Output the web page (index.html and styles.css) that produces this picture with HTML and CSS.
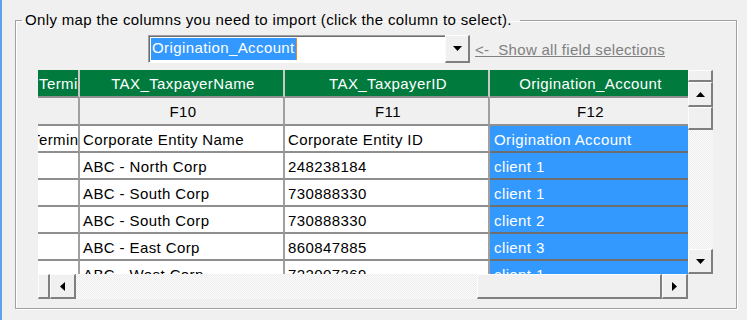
FILE: index.html
```html
<!DOCTYPE html>
<html>
<head>
<meta charset="utf-8">
<link rel="stylesheet" href="styles.css">
</head>
<body>
<fieldset class="group">
  <legend class="legend">Only map the columns you need to import (click the column to select).</legend>
  <div class="combo-row">
    <div class="combo">
      <div class="combo-field"><span class="sel">Origination_Account</span></div>
      <div class="sb-btn combo-btn"><svg width="9" height="5" viewBox="0 0 9 5"><polygon points="0,0 9,0 4.5,5" fill="#000"/></svg></div>
    </div>
    <span class="link">&lt;- &nbsp;Show all field selections</span>
  </div>
  <div class="gridbox">
    <div class="viewport">
      <div class="row head">
        <div class="cell c1">Termi</div>
        <div class="cell">TAX_TaxpayerName</div>
        <div class="cell">TAX_TaxpayerID</div>
        <div class="cell last">Origination_Account</div>
      </div>
      <div class="row fields">
        <div class="cell c1"></div>
        <div class="cell">F10</div>
        <div class="cell">F11</div>
        <div class="cell last">F12</div>
      </div>
      <div class="row">
        <div class="cell c1"><span class="clip">Termin</span></div>
        <div class="cell">Corporate Entity Name</div>
        <div class="cell">Corporate Entity ID</div>
        <div class="cell last sel-col">Origination Account</div>
      </div>
      <div class="row">
        <div class="cell c1"></div>
        <div class="cell">ABC - North Corp</div>
        <div class="cell">248238184</div>
        <div class="cell last sel-col">client 1</div>
      </div>
      <div class="row">
        <div class="cell c1"></div>
        <div class="cell">ABC - South Corp</div>
        <div class="cell">730888330</div>
        <div class="cell last sel-col">client 1</div>
      </div>
      <div class="row">
        <div class="cell c1"></div>
        <div class="cell">ABC - South Corp</div>
        <div class="cell">730888330</div>
        <div class="cell last sel-col">client 2</div>
      </div>
      <div class="row">
        <div class="cell c1"></div>
        <div class="cell">ABC - East Corp</div>
        <div class="cell">860847885</div>
        <div class="cell last sel-col">client 3</div>
      </div>
      <div class="row">
        <div class="cell c1"></div>
        <div class="cell">ABC - West Corp</div>
        <div class="cell">722007369</div>
        <div class="cell last sel-col">client 1</div>
      </div>
    </div>
    <div class="vscroll">
      <div class="sb-btn split-v"></div>
      <div class="sb-btn arrow"><svg width="9" height="5" viewBox="0 0 9 5"><polygon points="4.5,0 9,5 0,5" fill="#000"/></svg></div>
      <div class="sb-btn thumb-v"></div>
      <div class="track"></div>
      <div class="sb-btn arrow"><svg width="9" height="5" viewBox="0 0 9 5"><polygon points="0,0 9,0 4.5,5" fill="#000"/></svg></div>
    </div>
    <div class="hscroll">
      <div class="sb-btn split-h"></div>
      <div class="sb-btn arrow-h"><svg width="5" height="9" viewBox="0 0 5 9"><polygon points="5,0 5,9 0,4.5" fill="#000"/></svg></div>
      <div class="track"></div>
      <div class="sb-btn thumb-h"></div>
      <div class="sb-btn arrow-h"><svg width="5" height="9" viewBox="0 0 5 9"><polygon points="0,0 5,4.5 0,9" fill="#000"/></svg></div>
    </div>
    <div class="corner"></div>
  </div>
</fieldset>
</body>
</html>
```

FILE: styles.css
```css
html, body {
  margin: 0;
  padding: 0;
}
body {
  width: 747px;
  height: 320px;
  box-sizing: border-box;
  border-left: 2px solid #5ea2ec;
  background: #f0f0f0;
  overflow: hidden;
  font-family: "Liberation Sans", Arial, sans-serif;
  font-size: 15px;
  letter-spacing: 0.4px;
  color: #000;
}
.group {
  margin: 10px 0 0 13px;
  padding: 5px 0 0 0;
  width: 722px;
  height: 299px;
  box-sizing: border-box;
  border: 1px solid #a0a0a0;
  box-shadow: inset 1px 1px 0 #fff, 1px 1px 0 #fff;
  min-width: 0;
}
.legend {
  margin-left: 6px;
  padding: 0 8px 0 3px;
  line-height: 20px;
  letter-spacing: 0.35px;
}
.combo-row {
  display: flex;
  align-items: center;
  margin-left: 132px;
  height: 28px;
}
.combo {
  display: flex;
  width: 322px;
  height: 28px;
  box-sizing: border-box;
}
.combo-field {
  flex: 1;
  background: #fff;
  border-top: 1px solid #a0a0a0;
  border-left: 1px solid #a0a0a0;
  border-bottom: 1px solid #fff;
  box-shadow: inset 1px 1px 0 #6d6d6d;
  padding: 2px 0 2px 2px;
  display: flex;
}
.sel {
  background: #3399ff;
  color: #fff;
  line-height: 20px;
  padding: 0 1px 0 1px;
  border-right: 1px solid #e08a2a;
}
.combo-btn {
  width: 25px;
}
.link {
  margin-left: 5px;
  color: #808080;
  text-decoration: underline;
  letter-spacing: 0.3px;
}
.gridbox {
  margin: 7px 0 0 22px;
  display: grid;
  grid-template-columns: 650px 25px;
  grid-template-rows: 204px 25px;
}
.viewport {
  overflow: hidden;
  background: #f0f0f0;
}
.row {
  display: grid;
  grid-template-columns: 42px 205px 205px 198px;
  height: 27px;
}
.row.head, .row.fields {
  height: 28px;
}
.cell {
  box-sizing: border-box;
  border-right: 2px solid #a0a0a0;
  border-bottom: 2px solid #8f8f8f;
  background: #fff;
  padding: 1px 0 0 3px;
  white-space: nowrap;
  overflow: hidden;
  display: flex;
  align-items: center;
}
.cell.last {
  border-right: none;
}
.head .cell {
  background: #007a3d;
  color: #fff;
  justify-content: center;
  border-right-color: #c8c8c8;
}
.head .cell.c1 {
  justify-content: flex-start;
  padding-left: 1px;
}
.fields .cell {
  background: #f0f0f0;
  justify-content: center;
}
.cell.c1 {
  padding-left: 0;
}
.clip {
  margin-left: -7px;
}
.sel-col {
  background: #3399ff;
  color: #fff;
  border-bottom-color: #6e6e6e;
  padding-left: 4px;
}
.sb-btn {
  box-sizing: border-box;
  background: #f0f0f0;
  border-style: solid;
  border-width: 1px 2px 2px 1px;
  border-color: #fcfcfc #7f7f7f #7f7f7f #fcfcfc;
  display: flex;
  align-items: center;
  justify-content: center;
}
.track {
  flex: 1;
  background: repeating-conic-gradient(#fdfdfd 0 25%, #ececec 0 50%) 0 0 / 2px 2px;
}
.vscroll {
  grid-column: 2;
  grid-row: 1;
  display: flex;
  flex-direction: column;
}
.split-v { height: 12px; }
.arrow { height: 25px; }
.thumb-v { height: 23px; }
.hscroll {
  grid-column: 1;
  grid-row: 2;
  display: flex;
}
.split-h { width: 12px; }
.arrow-h { width: 26px; }
.thumb-h { width: 185px; }
.corner {
  grid-column: 2;
  grid-row: 2;
}
```
